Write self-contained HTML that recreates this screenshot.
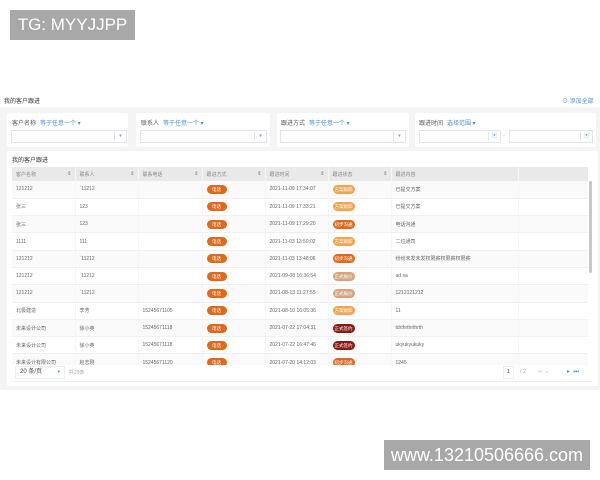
<!DOCTYPE html>
<html><head><meta charset="utf-8"><style>
*{margin:0;padding:0;box-sizing:border-box}
body{width:600px;height:480px;background:#fff;position:relative;overflow:hidden;font-family:"Liberation Sans","Noto Sans CJK SC",sans-serif;color:#555;font-size:5px}
.abs{position:absolute}
.wm{position:absolute;background:#a8a8a8;color:#fff;font-family:"Liberation Sans",sans-serif;display:flex;align-items:center;justify-content:center}
.grey{position:absolute;left:0;top:107px;width:600px;height:283px;background:#f4f4f5}
.card{position:absolute;background:#fff;border-radius:2px}
.lab{position:absolute;font-size:6px;color:#555}
.lab b{font-weight:normal;color:#4a90d9;margin-left:4px}
.inp{position:absolute;border:1px solid #e4e4e4;height:13px;background:#fff}
.inp i{position:absolute;right:0;top:1px;width:12px;height:9px;border-left:1px solid #e4e4e4;color:#6a9fd8;font-style:normal;font-size:5px;text-align:center;line-height:9px}
table{border-collapse:collapse;table-layout:fixed;position:absolute;left:12px;top:167px;width:576px}
td{height:17.3px;font-size:5px;padding-left:4px;border-bottom:1px solid #f0f0f0;border-right:1px solid #f6f6f6;white-space:nowrap;overflow:hidden;color:#666}
th{height:14px;background:#e9e9ea;font-weight:normal;font-size:5px;color:#888;text-align:left;padding-left:4px;border-right:1px solid #f6f6f6;position:relative}
th span{position:absolute;right:3px;color:#777}
.b{display:inline-block;width:22px;height:9px;border-radius:4.5px;color:#fff;font-size:4.5px;text-align:center;line-height:9px}
.tel{background:#e0691b;width:20px}.fa{background:#f3a34f}.cb{background:#e0691b}.zb{background:#d6a57c}.qy{background:#8b1a12}
tr:nth-child(even) td{background:#fafafa}
</style></head><body>
<div class="wm" style="left:10px;top:10px;width:125px;height:30px;font-size:17px">TG: MYYJJPP</div>
<div class="abs" style="left:4px;top:96px;font-size:6px;color:#333">我的客户跟进</div>
<div class="abs" style="left:562px;top:96px;font-size:6px;color:#4a90d9">⊙ 添加全部</div>
<div class="grey"></div>
<div class="card" style="left:7px;top:113px;width:121px;height:34px"></div>
<div class="card" style="left:136px;top:113px;width:134px;height:34px"></div>
<div class="card" style="left:277px;top:113px;width:132px;height:34px"></div>
<div class="card" style="left:415px;top:113px;width:181px;height:34px"></div>
<div class="lab" style="left:12px;top:118px">客户名称<b>等于任意一个 ▾</b></div>
<div class="lab" style="left:141px;top:118px">联系人<b>等于任意一个 ▾</b></div>
<div class="lab" style="left:281px;top:118px">跟进方式<b>等于任意一个 ▾</b></div>
<div class="lab" style="left:419px;top:118px">跟进时间<b>选择范围 ▾</b></div>
<div class="inp" style="left:11px;top:130px;width:116px"><i>▾</i></div>
<div class="inp" style="left:140px;top:130px;width:127px"><i>▾</i></div>
<div class="inp" style="left:280px;top:130px;width:126px"><i>▾</i></div>
<div class="inp" style="left:419px;top:130px;width:82px"><i>▣</i></div>
<div class="abs" style="left:503px;top:133px;color:#999">-</div>
<div class="inp" style="left:509px;top:130px;width:84px"><i>▣</i></div>
<div class="card" style="left:7px;top:151px;width:591px;height:235px;overflow:hidden">
</div>
<div class="abs" style="left:12px;top:155px;font-size:6px;color:#333">我的客户跟进</div>
<div class="abs" style="left:12px;top:167px;width:576px;height:199px;overflow:hidden">
<table style="left:0;top:0">
<colgroup><col style="width:63px"><col style="width:63px"><col style="width:64px"><col style="width:63px"><col style="width:63px"><col style="width:63px"><col style="width:127px"><col style="width:70px"></colgroup>
<tr><th>客户名称<span>⇕</span></th><th>联系人<span>⇕</span></th><th>联系电话<span>⇕</span></th><th>跟进方式<span>⇕</span></th><th>跟进时间<span>⇕</span></th><th>跟进状态<span>⇕</span></th><th>跟进内容</th><th></th></tr>
<tr><td>121212</td><td>`11212</td><td></td><td><span class="b tel">电话</span></td><td>2021-11-09 17:34:07</td><td><span class="b fa">方案跟踪</span></td><td>已提交方案</td><td></td></tr>
<tr><td>张三</td><td>123</td><td></td><td><span class="b tel">电话</span></td><td>2021-11-09 17:33:21</td><td><span class="b fa">方案跟踪</span></td><td>已提交方案</td><td></td></tr>
<tr><td>张三</td><td>123</td><td></td><td><span class="b tel">电话</span></td><td>2021-11-09 17:29:20</td><td><span class="b cb">初步沟通</span></td><td>电话沟通</td><td></td></tr>
<tr><td>1111</td><td>111</td><td></td><td><span class="b tel">电话</span></td><td>2021-11-03 13:50:02</td><td><span class="b fa">方案跟踪</span></td><td>二位通司</td><td></td></tr>
<tr><td>121212</td><td>`11212</td><td></td><td><span class="b tel">电话</span></td><td>2021-11-03 13:48:06</td><td><span class="b cb">初步沟通</span></td><td>纷纷未发未发权限薪权限薪权限薪</td><td></td></tr>
<tr><td>121212</td><td>`11212</td><td></td><td><span class="b tel">电话</span></td><td>2021-09-08 16:36:54</td><td><span class="b zb">正式报价</span></td><td>ad sa</td><td></td></tr>
<tr><td>121212</td><td>`11212</td><td></td><td><span class="b tel">电话</span></td><td>2021-08-13 11:27:55</td><td><span class="b zb">正式报价</span></td><td>1212121212</td><td></td></tr>
<tr><td>北极建造</td><td>李芳</td><td>15245671105</td><td><span class="b tel">电话</span></td><td>2021-08-10 16:05:36</td><td><span class="b fa">方案跟踪</span></td><td>11</td><td></td></tr>
<tr><td>未来设计公司</td><td>徐小英</td><td>15245671118</td><td><span class="b tel">电话</span></td><td>2021-07-22 17:04:31</td><td><span class="b qy">正式签约</span></td><td>tdrthrthrthrth</td><td></td></tr>
<tr><td>未来设计公司</td><td>徐小英</td><td>15245671118</td><td><span class="b tel">电话</span></td><td>2021-07-22 16:47:46</td><td><span class="b qy">正式签约</span></td><td>ukyukyukuky</td><td></td></tr>
<tr><td>未来设计有限公司</td><td>赵志刚</td><td>15245671120</td><td><span class="b tel">电话</span></td><td>2021-07-20 14:12:03</td><td><span class="b cb">初步沟通</span></td><td>1245</td><td></td></tr>
</table>
</div>
<div class="abs" style="left:589px;top:181px;width:3px;height:92px;background:#c8c8c8;border-radius:1px"></div>
<div class="abs" style="left:12px;top:365px;width:580px;height:17px;background:#fff;border-bottom:1px solid #eee"></div>
<div class="abs" style="left:15px;top:366px;width:50px;height:13px;border:1px solid #eee;font-size:6px;line-height:11px;padding-left:4px;color:#444">20 条/页<span style="position:absolute;right:4px;color:#4a90d9;font-size:5px">▾</span></div>
<div class="abs" style="left:69px;top:369px;color:#aaa">共29条</div>
<div class="abs" style="left:503px;top:366px;width:11px;height:13px;border:1px solid #eee;font-size:5.5px;text-align:center;line-height:11px;color:#333">1</div>
<div class="abs" style="left:520px;top:369px;color:#aaa;font-size:5.5px">/ 2</div>
<div class="abs" style="left:538px;top:369px;color:#ccc;font-size:5px">⏮ &nbsp;◂</div>
<div class="abs" style="left:567px;top:368px;color:#4a90d9;font-size:6px">▸ &nbsp;⏭</div>
<div class="wm" style="left:384px;top:440px;width:206px;height:30px;font-size:18px">www.13210506666.com</div>
</body></html>
